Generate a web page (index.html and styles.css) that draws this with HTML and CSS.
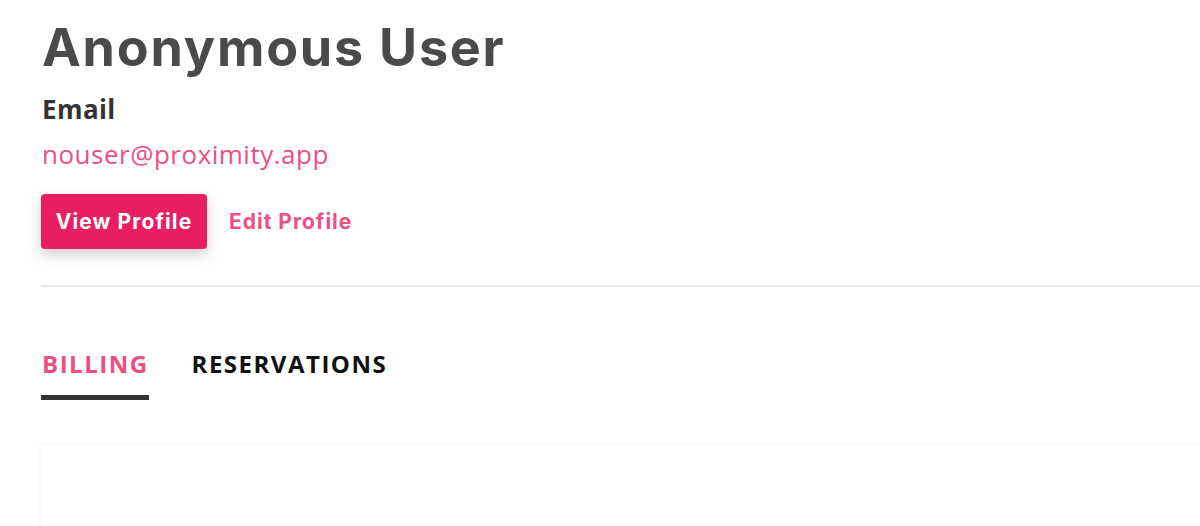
FILE: index.html
```html
<!DOCTYPE html>
<html lang="en">
<head>
    <meta charset="UTF-8">
    <meta name="viewport" content="width=device-width, initial-scale=1.0">
    <title>Account</title>
    <link rel="stylesheet" href="styles.css">
</head>
<body>

    <div class="page">
        <h1 class="user-name">Anonymous User</h1>

        <div class="field-label">Email</div>
        <a class="field-value" href="#">nouser@proximity.app</a>

        <div class="actions">
            <button class="btn-primary">View Profile</button>
            <a class="btn-link" href="#">Edit Profile</a>
        </div>

        <hr class="divider">

        <div class="tabs">
            <div class="tab active">BILLING</div>
            <div class="tab">RESERVATIONS</div>
        </div>

        <div class="panel"></div>
    </div>

</body>
</html>
```

FILE: styles.css
```css
body {
    margin: 0;
    background: #ffffff;
    font-family: "Open Sans", "Noto Sans", sans-serif;
    overflow: hidden;
}
.page {
    padding: 17px 0 0 41px;
}
.user-name {
    margin: 0 0 0 1px;
    font-family: Inter, "Liberation Sans", sans-serif;
    font-size: 52px;
    font-weight: 700;
    letter-spacing: 1.8px;
    line-height: 62px;
    color: #4a4a4a;
}
.field-label {
    margin: 15px 0 0 1px;
    font-size: 26px;
    font-weight: 700;
    letter-spacing: 0.4px;
    line-height: 30px;
    color: #333333;
}
.field-value {
    display: block;
    margin: 15px 0 0 1px;
    font-size: 26px;
    letter-spacing: 0.5px;
    line-height: 30px;
    color: #ee4f83;
    text-decoration: none;
}
.actions {
    display: flex;
    align-items: center;
    gap: 22px;
    margin-top: 25px;
}
.btn-primary {
    width: 166px;
    height: 55px;
    border: none;
    border-radius: 4px;
    background: #e91e63;
    color: #ffffff;
    font-family: Inter, "Liberation Sans", sans-serif;
    font-size: 21px;
    font-weight: 700;
    letter-spacing: 1.1px;
    box-shadow: 0 6px 14px rgba(0, 0, 0, 0.18);
}
.btn-link {
    font-family: Inter, "Liberation Sans", sans-serif;
    font-size: 21px;
    font-weight: 700;
    letter-spacing: 1px;
    color: #ee4f83;
    text-decoration: none;
}
.divider {
    margin: 36px 0 0 0;
    border: none;
    border-top: 2px solid #e8e8e8;
}
.tabs {
    display: flex;
    gap: 42px;
    margin-top: 61px;
}
.tab {
    padding: 0 0 15px 1px;
    font-size: 24px;
    font-weight: 700;
    line-height: 32px;
    color: #111111;
    letter-spacing: 1.5px;
    border-bottom: 5px solid transparent;
}
.tab.active {
    color: #ee4f83;
    border-bottom-color: #333333;
}
.panel {
    margin-top: 45px;
    height: 200px;
    background: #ffffff;
    box-shadow: 0 0 6px rgba(0, 0, 0, 0.06);
}
```
